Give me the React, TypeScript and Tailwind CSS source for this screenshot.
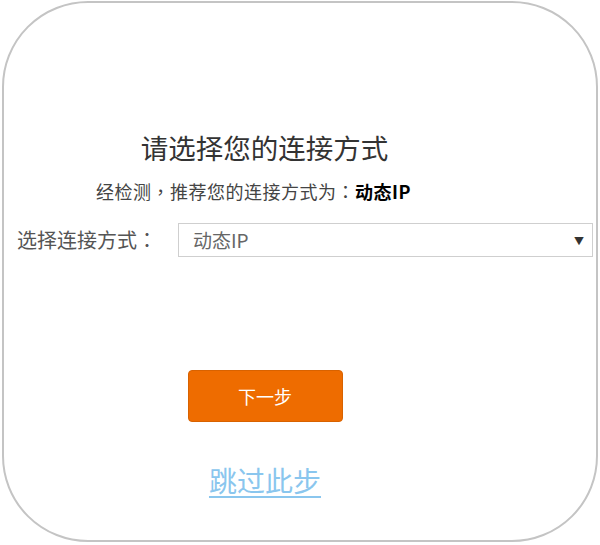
export default function App() {
  const punct = { fontFamily: '"Noto Sans CJK TC", sans-serif' }
  return (
    <div className="w-[600px] h-[545px] bg-white pt-px pl-[2px]" style={{ fontFamily: '"Noto Sans CJK SC", "Noto Sans", sans-serif' }}>
      <div className="w-[596px] h-[541px] border-2 border-[#c4c4c4] rounded-[86px] flex flex-col">
        <div className="w-[521px] flex flex-col items-center">
          <h1 className="mt-[126px] text-[27.5px] leading-[36px] text-[#333]">请选择您的连接方式</h1>
          <p className="mt-[13px] pr-[22px] text-[18px] leading-[26px] tracking-[0.5px] text-[#444]">
            经检测<span style={punct}>，</span>推荐您的连接方式为<span style={punct}>：</span>
            <span className="font-bold text-black">动态IP</span>
          </p>
        </div>
        <div className="mt-[19px] flex items-center pl-[13px]">
          <span className="w-[161px] text-[20px] leading-[34px] text-[#555]">
            选择连接方式<span style={punct}>：</span>
          </span>
          <div className="w-[415px] h-[34px] border border-[#cfcfcf] flex items-center justify-between pl-[14px] pr-[8px]">
            <span className="text-[19px] text-[#666]">动态IP</span>
            <span className="text-[10px] text-[#333]">▼</span>
          </div>
        </div>
        <div className="w-[526px] flex flex-col items-center">
          <button className="mt-[113px] -ml-[4px] w-[155px] h-[52px] rounded-[4px] bg-[#ee6c00] border border-[#d86200] text-white text-[18px]">
            下一步
          </button>
          <a className="mt-[40px] -ml-[4px] text-[28px] leading-[36px] text-[#8ac6ee] underline underline-offset-[4px]" href="#">
            跳过此步
          </a>
        </div>
      </div>
    </div>
  )
}
